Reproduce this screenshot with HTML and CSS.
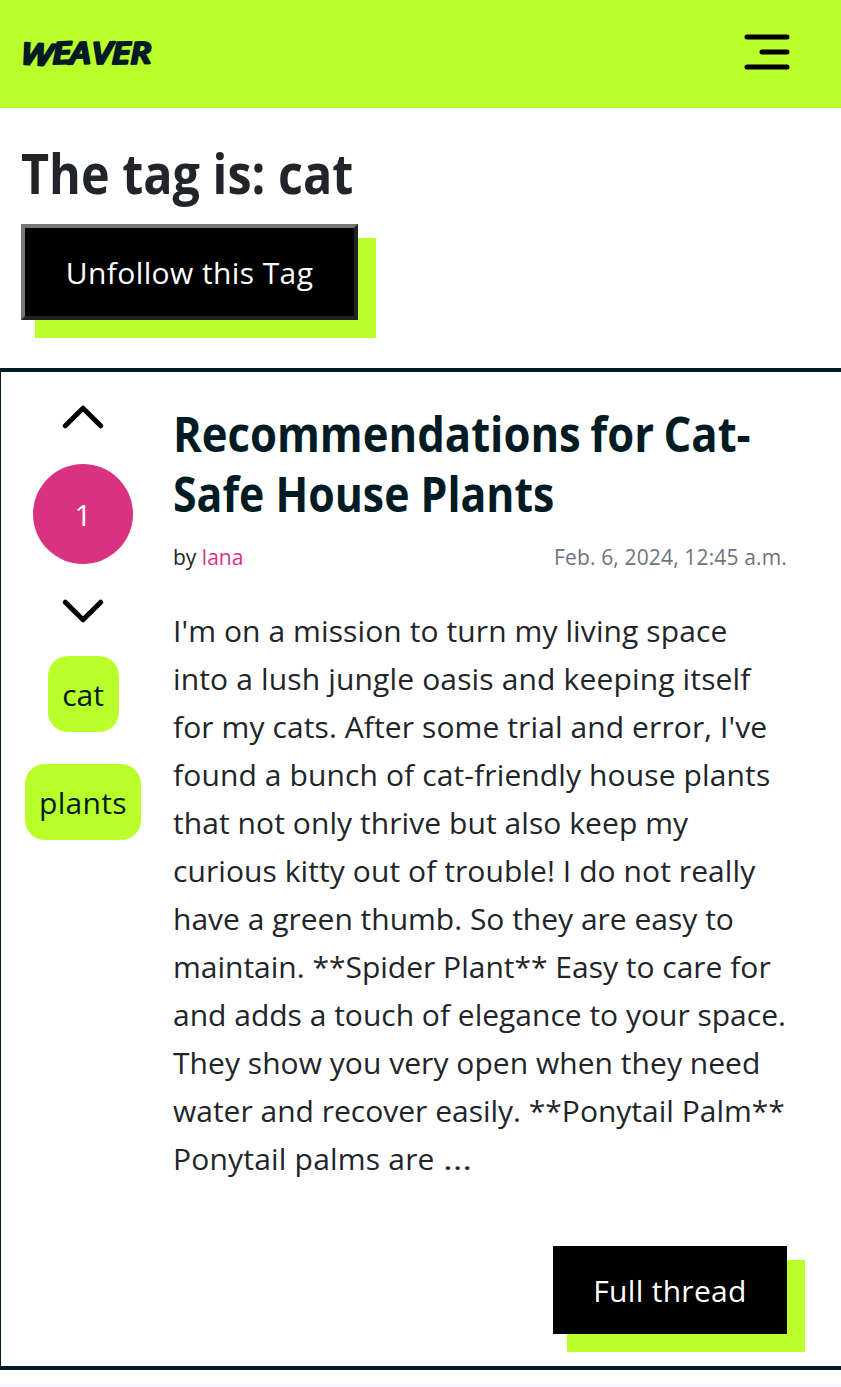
FILE: index.html
```
<!DOCTYPE html>
<html lang="en">
<head>
<meta charset="utf-8">
<title>Weaver</title>
<link rel="stylesheet" href="styles.css">
</head>
<body>
<header class="navbar">
  <svg class="logo" width="140" height="40" viewBox="0 0 140 40" role="img" aria-label="Weaver">
    <text transform="scale(1.2 1)" y="32" x="0 27 41.5 60 76.5 92" rotate="4 -3 -2 -2 -2 -3">WEAVER</text>
  </svg>
  <button class="menu" aria-label="Menu">
    <svg width="46" height="36" viewBox="0 0 46 36" fill="none" stroke="#000" stroke-width="5" stroke-linecap="round"><path d="M3 3H43M18 18H43M3 33H43"/></svg>
  </button>
</header>
<section class="tag-head">
  <h1><span>The tag is: cat</span></h1>
  <button class="btn btn-outset">Unfollow this Tag</button>
</section>
<article class="post">
  <aside class="side">
    <svg class="chev up" width="42" height="26" viewBox="0 0 42 26"><path d="M3.3 21.8L21 4.2L38.7 21.8"/></svg>
    <div class="score">1</div>
    <svg class="chev down" width="42" height="26" viewBox="0 0 42 26"><path d="M3.3 4.2L21 21.8L38.7 4.2"/></svg>
    <a class="tag">cat</a>
    <a class="tag plants">plants</a>
  </aside>
  <div class="main">
    <h2><span class="h-a">Recommendations for Cat-</span><span class="h-b">Safe House Plants</span></h2>
    <div class="meta"><span>by <a class="author">lana</a></span><time>Feb. 6, 2024, 12:45 a.m.</time></div>
    <p class="text">
      <span class="l1">I'm on a mission to turn my living space</span>
      <span class="l2">into a lush jungle oasis and keeping itself</span>
      <span class="l3">for my cats. After some trial and error, I've</span>
      <span class="l4">found a bunch of cat-friendly house plants</span>
      <span class="l5">that not only thrive but also keep my</span>
      <span class="l6">curious kitty out of trouble! I do not really</span>
      <span class="l7">have a green thumb. So they are easy to</span>
      <span class="l8">maintain. **Spider Plant** Easy to care for</span>
      <span class="l9">and adds a touch of elegance to your space.</span>
      <span class="l10">They show you very open when they need</span>
      <span class="l11">water and recover easily. **Ponytail Palm**</span>
      <span class="l12">Ponytail palms are <i>…</i></span>
    </p>
    <a class="btn full">Full thread</a>
  </div>
</article>
<footer class="foot"></footer>
</body>
</html>
```
FILE: styles.css
```
* { box-sizing: border-box; }
body {
  margin: 0;
  height: 1387px;
  overflow: hidden;
  background: #fff;
  color: #212529;
  font: 30px/48px "Open Sans", "Noto Sans", sans-serif;
}
.navbar {
  height: 108px;
  padding: 0 50px 4px 20px;
  display: flex;
  align-items: center;
  justify-content: space-between;
  background: #b9ff2b;
}
.logo { overflow: visible; }
.logo text {
  font: italic 600 30px "Open Sans", sans-serif;
  fill: #001b24;
  stroke: #001b24;
  stroke-width: 2.2;
  stroke-linejoin: round;
}
.menu { padding: 0; border: 0; background: none; display: flex; margin-right: 1px; }
.tag-head { height: 260px; padding: 32px 21px 0; }
h1, h2, p { margin: 0; }
h1 {
  height: 84px;
  font-size: 55.5px;
  line-height: 66px;
  font-weight: 700;
}
h1 span, h2 span {
  display: block;
  width: max-content;
  transform-origin: 0 50%;
}
h1 span { transform: scaleX(.874); }
.btn {
  display: flex;
  align-items: center;
  justify-content: center;
  padding: 2px 0 0;
  border: 0;
  background: #000;
  color: #fff;
  font: 30px/48px "Open Sans", sans-serif;
  box-shadow: 16px 16px 0 2px #b9ff2b;
}
.btn-outset {
  width: 337px;
  height: 96px;
  border: 4px solid;
  border-color: #767676 #212121 #212121 #767676;
  letter-spacing: .4px;
}
.post {
  height: 1002px;
  display: grid;
  grid-template-columns: 164px minmax(0, 1fr);
  border: solid #001b24;
  border-width: 4px 0 4px 1px;
}
.side {
  display: flex;
  flex-direction: column;
  align-items: center;
  padding-top: 32px;
}
.chev { fill: none; stroke: #000; stroke-width: 5; stroke-linecap: round; stroke-linejoin: round; }
.score {
  width: 100px;
  height: 100px;
  margin: 34px 0;
  border-radius: 50%;
  background: #d93280;
  color: #fff;
  text-align: center;
  line-height: 102px;
}
.tag {
  height: 76px;
  width: 71px;
  margin-top: 32px;
  border-radius: 20px;
  background: #b9ff2b;
  color: #001b24;
  text-align: center;
  line-height: 78px;
}
.plants { width: 116px; letter-spacing: .3px; }
.main { padding: 32px 54px 0 8px; }
h2 {
  color: #001b24;
  font-size: 48px;
  line-height: 60px;
  font-weight: 700;
}
.h-a { transform: scaleX(.909); word-spacing: -2px; }
.h-b { transform: scaleX(.892); }
.meta {
  display: flex;
  justify-content: space-between;
  margin-top: 17px;
  font-size: 21px;
  line-height: 33px;
}
.author { color: #d93280; }
.meta time { color: #6c757d; letter-spacing: .15px; }
.text { margin-top: 33px; }
.text span { display: block; white-space: nowrap; }
.text i { font-style: normal; font-size: 30px; line-height: 1; display: inline-block; transform: scaleX(1.25); transform-origin: 0 50%; }
.l1 { letter-spacing: .1px; }
.l2 { letter-spacing: .15px; }
.l3 { letter-spacing: .1px; }
.l4 { letter-spacing: .12px; }
.l5 { letter-spacing: .07px; }
.l6 { letter-spacing: .08px; }
.l10 { letter-spacing: .04px; }
.l12 { letter-spacing: .2px; }
.full {
  width: 234px;
  height: 88px;
  margin: 63px 0 0 auto;
  letter-spacing: .3px;
}
.foot { margin-top: 14px; height: 3px; background: #f8f9ff; }
```
